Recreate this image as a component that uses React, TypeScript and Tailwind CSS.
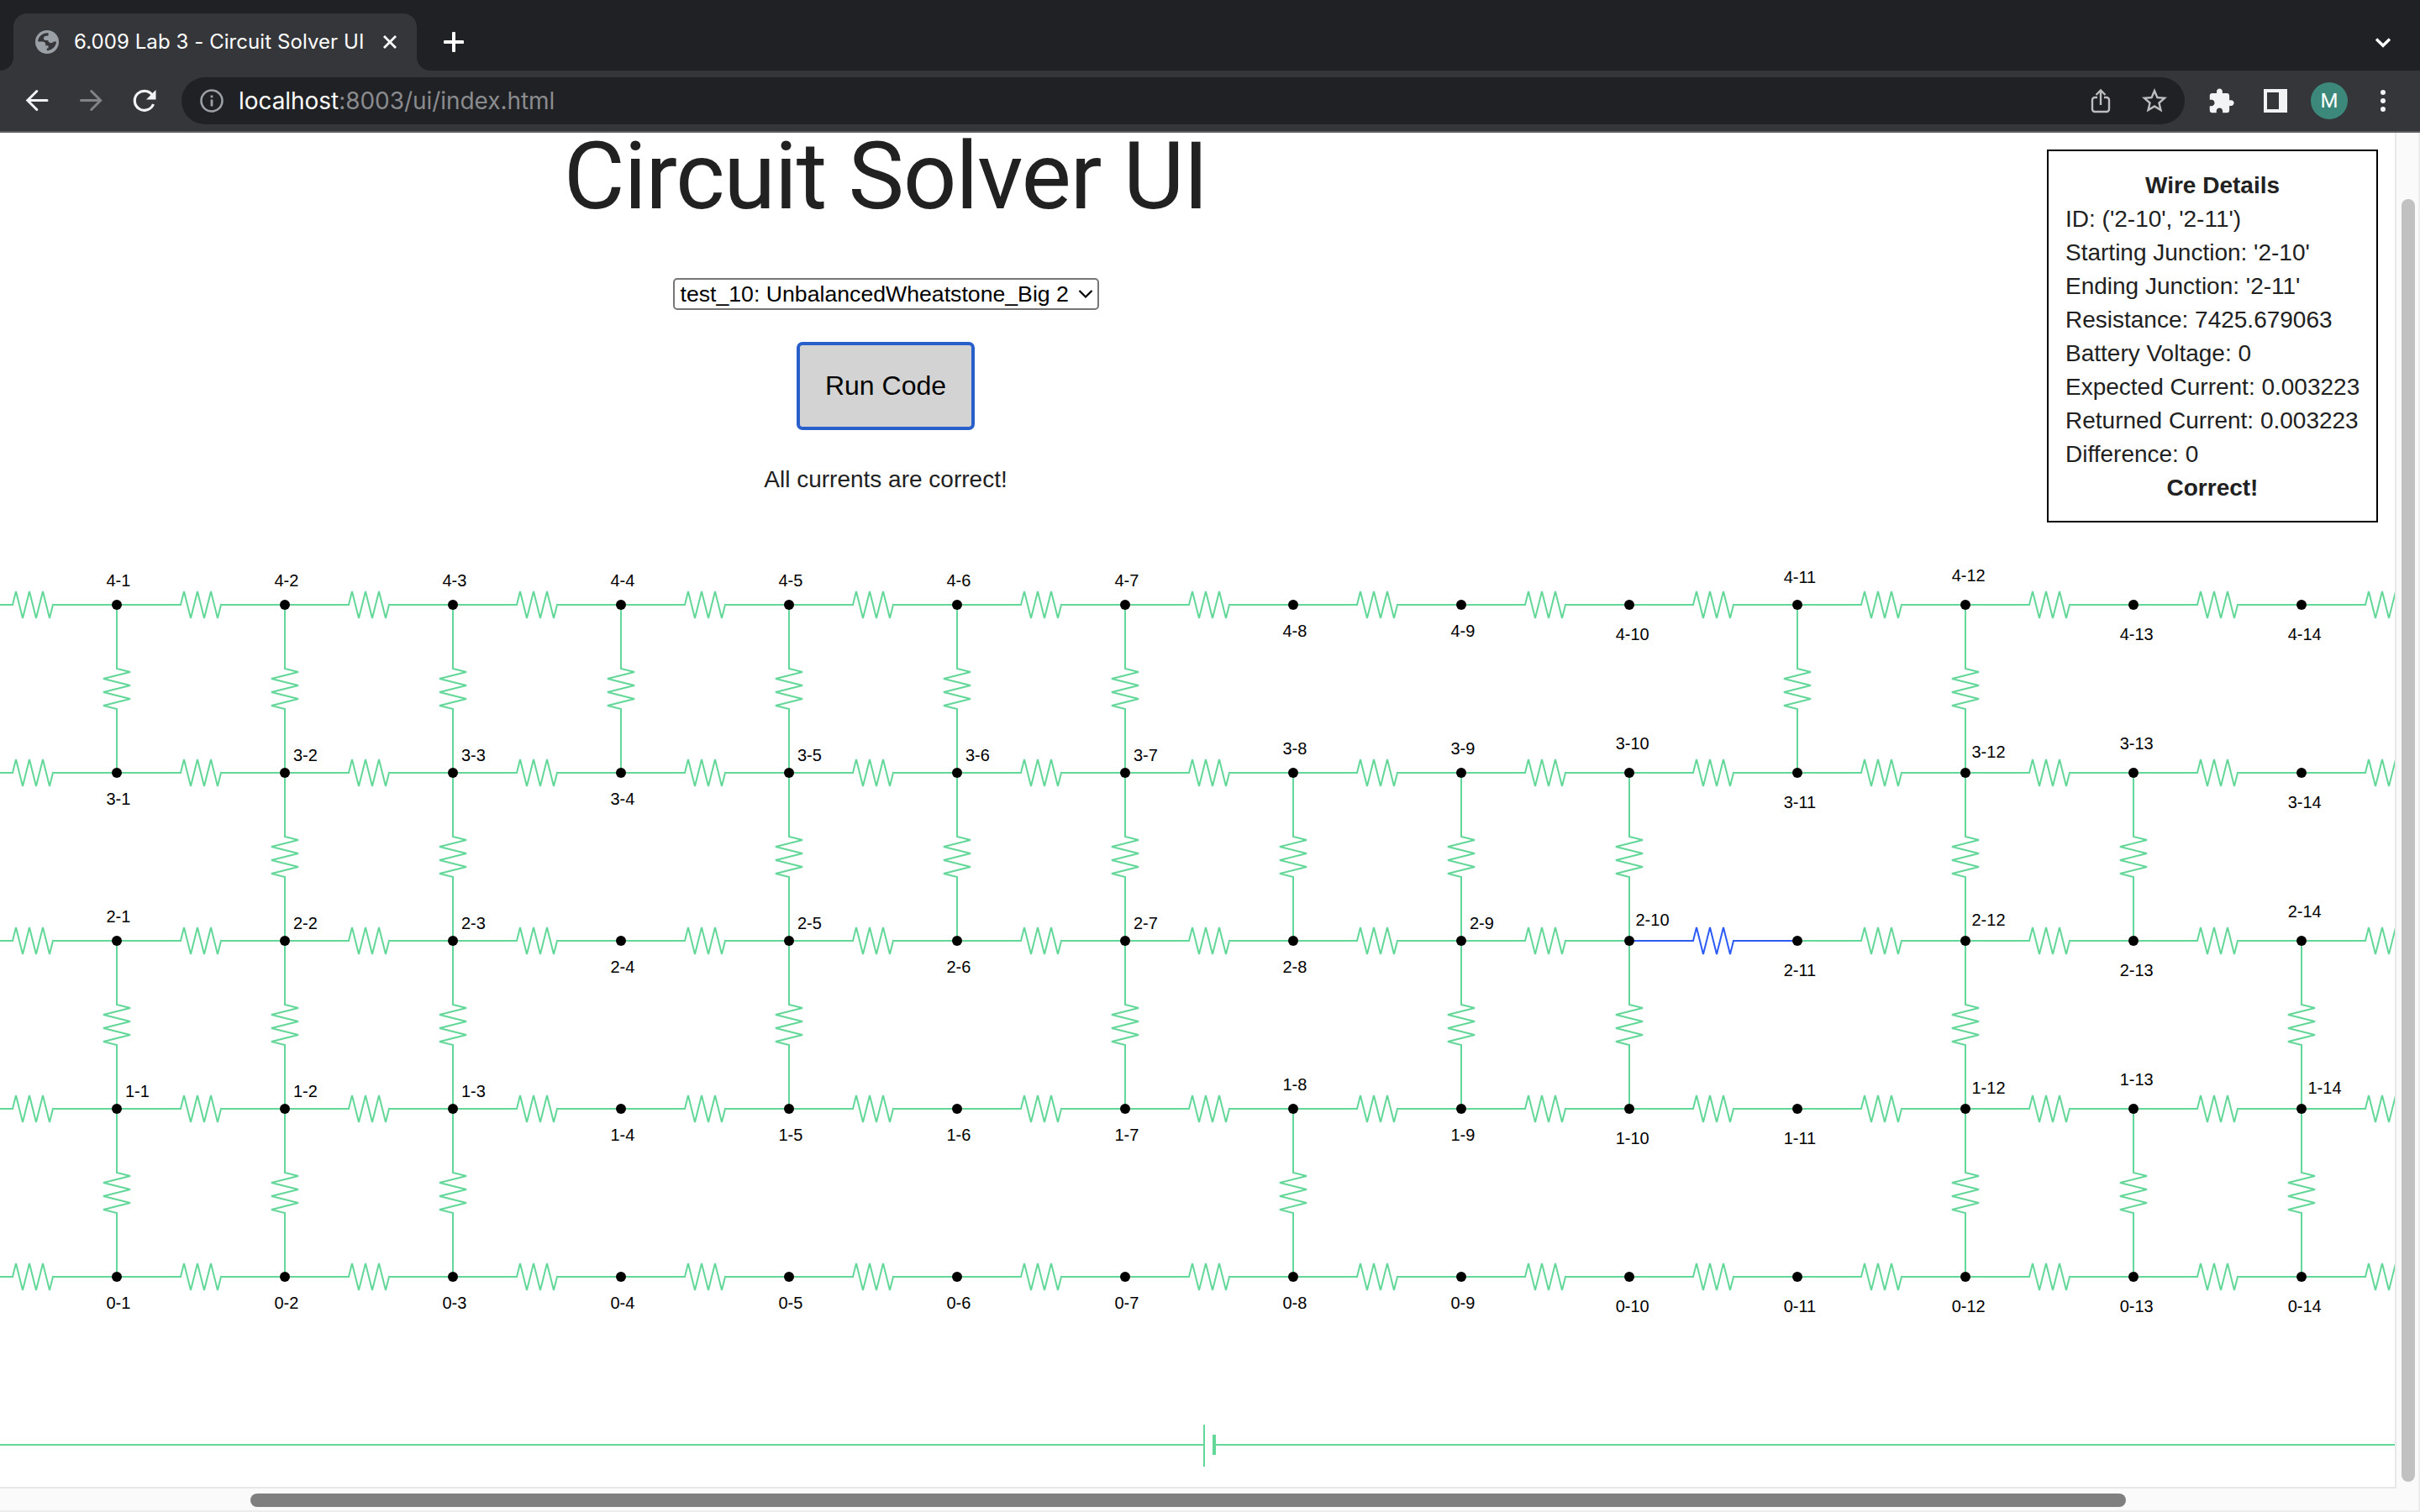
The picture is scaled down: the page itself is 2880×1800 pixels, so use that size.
import React from "react";

const GREEN = "#62d798";
const BLUE = "#2a5bf5";

const nodeX = (c: number) => 139 + (c - 1) * 200;
const nodeY = (r: number) => 1520 - r * 200 - 158;

// Columns whose lower/upper junction rows are joined by a vertical wire, keyed by the lower row.
const VERTICALS: Record<number, number[]> = {
  3: [1, 2, 3, 4, 5, 6, 7, 11, 12],
  2: [2, 3, 5, 6, 7, 8, 9, 10, 12, 13],
  1: [1, 2, 3, 5, 7, 9, 10, 12, 14],
  0: [1, 2, 3, 8, 12, 13, 14],
};

type Place = "above" | "side" | "below";

const has = (row: number, col: number) => (VERTICALS[row] ?? []).includes(col);

function placeOf(row: number, col: number): Place {
  if (row === 0) return "below";
  const up = has(row, col);
  const down = has(row - 1, col);
  if (up && down) return "side";
  return down ? "above" : "below";
}

// The top row has no row above it, so its labels sit above when a wire leaves downwards.
function Label({ row, col }: { row: number; col: number }) {
  const wide = col > 9;
  const place = placeOf(row, col);
  const dx = place === "side" ? (wide ? 7.5 : 10) : wide ? -16.3 : -12.5;
  let dy =
    place === "side" ? (wide ? -18 : -14) : place === "above" ? (wide ? -28 : -22) : wide ? 42 : 38;
  if (place === "above" && col === 11) dy = -26;
  return (
    <text x={nodeX(col) + dx} y={nodeY(row) + dy} fontSize={20} fill="#000">
      {`${row}-${col}`}
    </text>
  );
}

function HWire({ col, row }: { col: number; row: number }) {
  const x = nodeX(col);
  const y = nodeY(row);
  const on = col === 10 && row === 2;
  return (
    <path
      d={`M${x} ${y}h76l4 -16l8 32l8 -32l8 32l8 -32l8 32l4 -16h76`}
      stroke={on ? BLUE : GREEN}
    />
  );
}

function VWire({ col, row }: { col: number; row: number }) {
  return (
    <path
      d={`M${nodeX(col)} ${nodeY(row + 1)}v76l16 4l-32 8l32 8l-32 8l32 8l-32 8l16 4v76`}
      stroke={GREEN}
    />
  );
}

const ROWS = [4, 3, 2, 1, 0];
const COLS = Array.from({ length: 14 }, (_, i) => i + 1);

function Circuit() {
  return (
    <svg className="absolute left-0 top-0" width="2850" height="1612" viewBox="0 0 2850 1612">
      <g fill="none" strokeWidth="2">
        {ROWS.map((r) => [0, ...COLS].map((c) => <HWire key={`${r}-${c}`} row={r} col={c} />))}
        {ROWS.map((r) => (VERTICALS[r] ?? []).map((c) => <VWire key={`${r}-${c}`} row={r} col={c} />))}
        <path d="M0 1562H1433M1433 1538V1588M1447 1562H2850" stroke={GREEN} />
        <path d="M1445 1550V1574" stroke={GREEN} strokeWidth="4" />
      </g>
      {ROWS.map((r) =>
        COLS.map((c) => (
          <g key={`${r}-${c}`}>
            <circle cx={nodeX(c)} cy={nodeY(r)} r="6" fill="#000" />
            <Label row={r} col={c} />
          </g>
        ))
      )}
    </svg>
  );
}

function TabStrip() {
  return (
    <div className="flex h-[84px] items-end bg-[#202124]">
      <div className="size-4 shrink-0 bg-[#35363a]">
        <div className="size-4 rounded-br-[16px] bg-[#202124]" />
      </div>
      <div className="flex h-[68px] w-[480px] shrink-0 items-center rounded-t-[16px] bg-[#35363a] pl-[26px]">
        <svg width="28" height="28" viewBox="0 0 28 28">
          <circle cx="14" cy="14" r="14" fill="#9aa0a6" />
          <path
            d="M15.5 3.2C9 2.6 3.4 7.4 3 13.6h5.2c2.6 0 4 1.2 4 3.2v1.4h3.3v3.2h-1.7v2.9c6-.2 10.9-4.8 11.2-10.7h-3c-1.6 1.6-3.4 2-5 1.2-1.3-.7-1.2-2-1.9-2.5-.9-.6-3.3.2-4.600-1-1.2-1.2-.6-4 1.700-4.600h2.200c1.200 0 1.600-1.200 1.100-3.500z"
            fill="#35363a"
          />
        </svg>
        <span className="ml-[18px] w-[344px] whitespace-nowrap font-['Inter'] text-[24px] leading-[34px] tracking-[0.07px] text-white">
          6.009 Lab 3 - Circuit Solver UI
        </span>
        <svg className="ml-[24px]" width="16" height="16" viewBox="0 0 16 16">
          <path d="M1 1L15 15M15 1L1 15" stroke="#fff" strokeWidth="2.8" />
        </svg>
      </div>
      <div className="size-4 shrink-0 bg-[#35363a]">
        <div className="size-4 rounded-bl-[16px] bg-[#202124]" />
      </div>
      <svg className="mb-[22px] ml-4" width="24" height="24" viewBox="0 0 24 24">
        <path d="M12 1.5V22.5M1.5 12H22.5" stroke="#fff" strokeWidth="4" strokeLinecap="round" />
      </svg>
      <svg className="mb-[27px] ml-auto mr-[34px]" width="20" height="13" viewBox="0 0 20 13">
        <path d="M2 2.5L10 10.3L18 2.5" fill="none" stroke="#fff" strokeWidth="3.4" />
      </svg>
    </div>
  );
}

function Toolbar() {
  return (
    <div className="flex h-[74px] items-center border-b-2 border-[#5d5e62] bg-[#35363a]">
      <svg className="ml-[30px]" width="28" height="28" viewBox="0 0 28 28">
        <path
          d="M26 13.500H3M13.800 2.500L2.800 13.500L13.800 24.500"
          fill="none"
          stroke="#f1f3f4"
          strokeWidth="3"
          strokeLinecap="round"
        />
      </svg>
      <svg className="ml-9" width="28" height="28" viewBox="0 0 28 28">
        <path
          d="M2.500 13.500H25M14.700 2.500L25.700 13.500L14.700 24.500"
          fill="none"
          stroke="#828386"
          strokeWidth="3"
          strokeLinecap="round"
        />
      </svg>
      <svg className="ml-9" width="28" height="28" viewBox="0 0 28 28">
        <path d="M24 8.500A11.500 11.500 0 1 0 24.500 18" fill="none" stroke="#f1f3f4" strokeWidth="3.2" />
        <path d="M27.500 1V12.500H16z" fill="#f1f3f4" />
      </svg>
      <div className="ml-[30px] flex h-14 w-[2384px] items-center rounded-full bg-[#202124] pl-[22px] pr-[18px]">
        <svg width="28" height="28" viewBox="0 0 28 28">
          <circle cx="14" cy="14" r="12.5" fill="none" stroke="#9aa0a6" strokeWidth="2.6" />
          <path d="M14 12.5V20.5M14 7.500V10.200" stroke="#9aa0a6" strokeWidth="2.8" />
        </svg>
        <span className="ml-[18px] whitespace-nowrap font-['Inter'] text-[28px] leading-[40px] tracking-[-0.05px] text-[#8a8b8e]">
          <span className="text-white">localhost</span>:8003/ui/index.html
        </span>
        <svg className="ml-auto" width="24" height="30" viewBox="0 0 24 30">
          <path
            d="M8 11H5A3 3 0 0 0 2 14V25A3 3 0 0 0 5 28H19A3 3 0 0 0 22 25V14A3 3 0 0 0 19 11H16M12 20V3M6.500 8L12 2.500L17.500 8"
            fill="none"
            stroke="#bdbdbf"
            strokeWidth="2.4"
          />
        </svg>
        <svg className="ml-[34px]" width="36" height="36" viewBox="0 0 24 24" fill="#bdbdbf">
          <path d="M22 9.240l-7.190-.62L12 2 9.190 8.630 2 9.240l5.460 4.730L5.820 21 12 17.270 18.180 21l-1.630-7.030L22 9.240zM12 15.400l-3.760 2.270 1-4.280-3.320-2.880 4.380-.38L12 6.100l1.710 4.040 4.380.38-3.320 2.880 1 4.280L12 15.400z" />
        </svg>
      </div>
      <svg className="ml-[27px]" width="33" height="33" viewBox="0 0 24 24" fill="#f1f3f4">
        <path d="M20.500 11H19V7c0-1.100-.9-2-2-2h-4V3.500C13 2.120 11.880 1 10.500 1S8 2.120 8 3.500V5H4c-1.100 0-1.990.9-1.990 2v3.800H3.500c1.490 0 2.700 1.210 2.700 2.700s-1.210 2.700-2.700 2.700H2V20c0 1.100.9 2 2 2h3.800v-1.500c0-1.490 1.210-2.700 2.700-2.700 1.490 0 2.700 1.210 2.700 2.700V22H17c1.100 0 2-.9 2-2v-4h1.500c1.380 0 2.500-1.120 2.500-2.500S21.880 11 20.500 11z" />
      </svg>
      <div className="ml-[34px] h-7 w-7 border-4 border-r-[10px] border-[#f1f3f4]" />
      <div className="ml-7 flex size-11 items-center justify-center rounded-full bg-[#3c897b] font-['Roboto'] text-[24px] text-white">
        M
      </div>
      <div className="ml-[39px] flex flex-col gap-1">
        <div className="size-1.5 rounded-full bg-[#f1f3f4]" />
        <div className="size-1.5 rounded-full bg-[#f1f3f4]" />
        <div className="size-1.5 rounded-full bg-[#f1f3f4]" />
      </div>
    </div>
  );
}

const DETAILS = [
  "ID: ('2-10', '2-11')",
  "Starting Junction: '2-10'",
  "Ending Junction: '2-11'",
  "Resistance: 7425.679063",
  "Battery Voltage: 0",
  "Expected Current: 0.003223",
  "Returned Current: 0.003223",
  "Difference: 0",
];

function WireDetails() {
  return (
    <div className="absolute left-[2436px] top-[20px] h-[444px] w-[394px] whitespace-nowrap border-2 border-black bg-white px-5 pt-[21px] text-[28px] leading-[40px]">
      <div className="text-center font-bold">Wire Details</div>
      {DETAILS.map((d) => (
        <div key={d}>{d}</div>
      ))}
      <div className="text-center font-bold">Correct!</div>
    </div>
  );
}

export default function App() {
  return (
    <div className="flex h-[1800px] w-[2880px] flex-col overflow-hidden bg-white font-['Liberation_Sans',sans-serif] text-[#212121]">
      <TabStrip />
      <Toolbar />
      <div className="flex h-[1612px]">
        <main className="relative h-[1612px] w-[2850px] overflow-hidden">
          <Circuit />
          <div className="relative flex w-[2108px] flex-col items-center">
            <h1 className="h-[110px] whitespace-nowrap pt-px font-['Roboto'] text-[112px] leading-[102px] tracking-[-1.3px]">
              Circuit Solver UI
            </h1>
            <div className="mt-[63px] flex h-[38px] w-[507px] items-center rounded-[5px] border-2 border-[#767676] bg-white pl-[7px] text-[26.67px] leading-[32px] text-black">
              <span className="w-[464px] whitespace-nowrap">test_10: UnbalancedWheatstone_Big 2</span>
              <svg className="ml-[9px]" width="18" height="12" viewBox="0 0 18 12">
                <path d="M1.5 2L9 9.5L16.5 2" fill="none" stroke="#000" strokeWidth="2.2" />
              </svg>
            </div>
            <button className="mt-[38px] flex h-[105px] w-[212px] items-center justify-center rounded-[7px] border-4 border-[#285fcb] bg-[#d3d3d3] pb-[2px] text-[32px] text-black">
              Run Code
            </button>
            <p className="mt-[39px] text-[28px] leading-[40px]">All currents are correct!</p>
          </div>
          <WireDetails />
        </main>
        <div className="w-[30px] border-l-2 border-r-2 border-l-[#e8e8e8] border-r-[#ededed] bg-[#fafafa] pl-[6px] pt-[79px]">
          <div className="h-[1527px] w-4 rounded-full bg-[#c1c1c1]" />
        </div>
      </div>
      <div className="flex h-[30px]">
        <div className="h-[30px] w-[2852px] border-b-2 border-t-2 border-b-[#ededed] border-t-[#e8e8e8] bg-[#fafafa] pl-[298px] pt-[6px]">
          <div className="h-4 w-[2232px] rounded-full bg-[#7f7f7f]" />
        </div>
        <div className="w-[28px] border-b-2 border-r-2 border-[#ededed] bg-[#fafafa]" />
      </div>
    </div>
  );
}
